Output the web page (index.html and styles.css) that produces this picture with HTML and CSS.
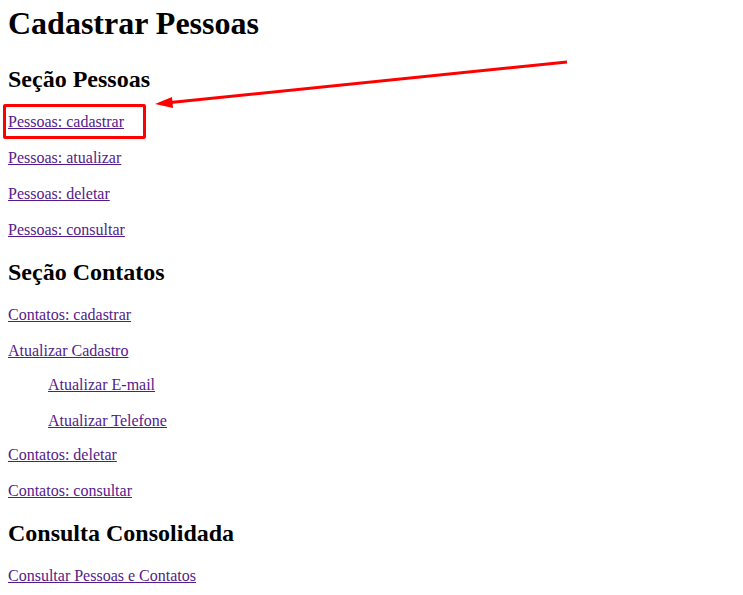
FILE: index.html
```html
<!DOCTYPE html>
<html lang="pt-BR">
<head>
<meta charset="utf-8">
<title>Cadastrar Pessoas</title>
<link rel="stylesheet" href="styles.css">
</head>
<body>
<h1>Cadastrar Pessoas</h1>
<h2>Seção Pessoas</h2>
<p><a href="#">Pessoas: cadastrar</a></p>
<p><a href="#">Pessoas: atualizar</a></p>
<p><a href="#">Pessoas: deletar</a></p>
<p><a href="#">Pessoas: consultar</a></p>
<h2>Seção Contatos</h2>
<p><a href="#">Contatos: cadastrar</a></p>
<p><a href="#">Atualizar Cadastro</a></p>
<div class="sub">
<p><a href="#">Atualizar E-mail</a></p>
<p><a href="#">Atualizar Telefone</a></p>
</div>
<p><a href="#">Contatos: deletar</a></p>
<p><a href="#">Contatos: consultar</a></p>
<h2>Consulta Consolidada</h2>
<p><a href="#">Consultar Pessoas e Contatos</a></p>
<div class="mark"></div>
<svg class="arrow" width="743" height="595" viewBox="0 0 743 595">
<line x1="567" y1="62" x2="168" y2="102.8" stroke="#f00" stroke-width="3"/>
<polygon points="155,104 172,97 173,108" fill="#f00"/>
</svg>
</body>
</html>
```
FILE: styles.css
```css
body {
  margin: 5px 8px 8px;
  font-family: "Liberation Serif", serif;
}
h1 { margin: 0 0 24px; }
h2 { margin: 19px 0 19px; }
p { line-height: 20px; }
a { color: #551a8b; }
.sub { margin: -2px 0 -2px 40px; }
.mark {
  position: absolute;
  left: 3px;
  top: 104px;
  width: 137px;
  height: 29px;
  border: 3px solid #f00;
  border-radius: 2px;
}
.arrow {
  position: absolute;
  left: 0;
  top: 0;
  pointer-events: none;
}
```
